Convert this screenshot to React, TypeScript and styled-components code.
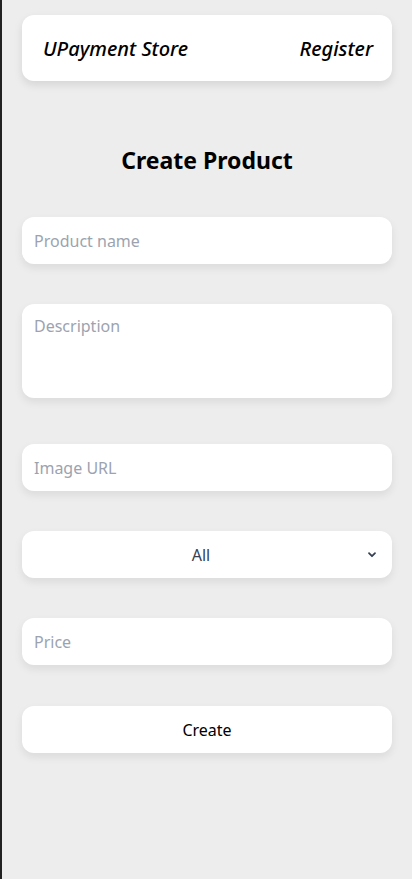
import React, { useState } from 'react';
import styled, { createGlobalStyle } from 'styled-components';

const GlobalStyle = createGlobalStyle`
  html, body {
    margin: 0;
    padding: 0;
    background: #ededed;
    font-family: "Noto Sans", "Open Sans", sans-serif;
  }
  * { box-sizing: border-box; }
`;

const Page = styled.div`
  min-height: 879px;
  border-left: 2px solid #222;
  padding: 15px 20px 40px 20px;
  background: #ededed;
`;

const Navbar = styled.nav`
  height: 66px;
  background: #fff;
  border-radius: 12px;
  box-shadow: 0 4px 8px rgba(0, 0, 0, 0.1);
  display: flex;
  align-items: center;
  justify-content: space-between;
  padding: 0 19px 0 21px;
`;

const NavLink = styled.a`
  font-size: 20px;
  font-style: italic;
  font-weight: 500;
  color: #000;
  cursor: pointer;
`;

const Title = styled.h1`
  margin: 63px 0 41px 0;
  text-align: center;
  font-size: 23px;
  font-weight: 700;
  color: #000;
`;

const Form = styled.form`
  display: flex;
  flex-direction: column;
`;

const fieldBase = `
  width: 100%;
  border: none;
  outline: none;
  background: #fff;
  border-radius: 12px;
  box-shadow: 0 4px 8px rgba(0, 0, 0, 0.08);
  font-family: "Noto Sans", "Open Sans", sans-serif;
  font-size: 16px;
  color: #374151;
`;

const Input = styled.input<{ $gap?: number }>`
  ${fieldBase}
  height: 47px;
  padding: 0 12px;
  margin-bottom: ${({ $gap }) => $gap ?? 40}px;
  &::placeholder { color: #9ca3af; }
`;

const TextArea = styled.textarea`
  ${fieldBase}
  height: 94px;
  padding: 11px 12px;
  resize: none;
  margin-bottom: 46px;
  &::placeholder { color: #9ca3af; }
`;

const SelectWrap = styled.div`
  position: relative;
  margin-bottom: 40px;
`;

const Select = styled.select`
  ${fieldBase}
  height: 47px;
  appearance: none;
  text-align: center;
  text-align-last: center;
  padding: 0 24px 0 12px;
  color: #374151;
`;

const Chevron = styled.svg`
  position: absolute;
  right: 14px;
  top: 18px;
  pointer-events: none;
`;

const Button = styled.button`
  ${fieldBase}
  height: 47px;
  color: #000;
  cursor: pointer;
`;

export default function App() {
  const [category, setCategory] = useState('All');
  return (
    <>
      <GlobalStyle />
      <Page>
        <Navbar>
          <NavLink>UPayment Store</NavLink>
          <NavLink>Register</NavLink>
        </Navbar>
        <Title>Create Product</Title>
        <Form onSubmit={(e) => e.preventDefault()}>
          <Input placeholder="Product name" />
          <TextArea placeholder="Description" />
          <Input placeholder="Image URL" />
          <SelectWrap>
            <Select value={category} onChange={(e) => setCategory(e.target.value)}>
              <option>All</option>
              <option>Electronics</option>
              <option>Clothing</option>
            </Select>
            <Chevron width="12" height="12" viewBox="0 0 20 20">
              <path d="M5 7l5 5 5-5" fill="none" stroke="#374151" strokeWidth="3" strokeLinecap="round" strokeLinejoin="round" />
            </Chevron>
          </SelectWrap>
          <Input placeholder="Price" $gap={41} />
          <Button type="submit">Create</Button>
        </Form>
      </Page>
    </>
  );
}
